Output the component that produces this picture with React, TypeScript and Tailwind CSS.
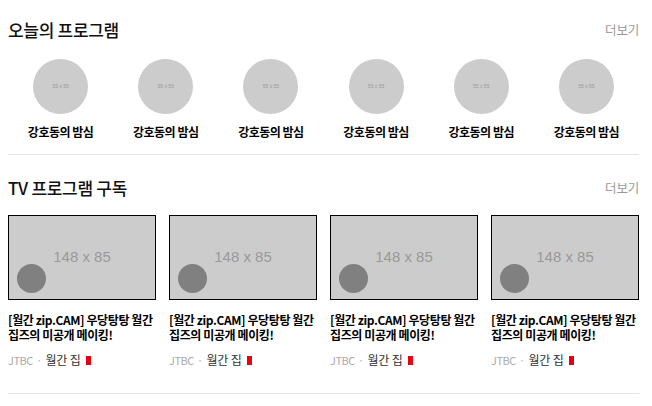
import React from "react";

const KR = { fontFamily: '"Noto Sans CJK KR", "Noto Sans", sans-serif' } as React.CSSProperties;

function Header({ title }: { title: string }) {
  return (
    <div className="flex h-[30px] items-center justify-between">
      <h2 className="text-[17px] font-medium tracking-[-0.3px] text-[#111]">{title}</h2>
      <a className="text-[12.5px] tracking-[-0.2px] text-[#999]">더보기</a>
    </div>
  );
}

export default function App() {
  const programs = Array.from({ length: 6 });
  const cards = Array.from({ length: 4 });
  return (
    <div className="w-[652px] h-[406px] bg-white overflow-hidden" style={KR}>
      <div className="ml-2 w-[631px]">
        <div className="mt-[15px]">
          <Header title="오늘의 프로그램" />
        </div>
        <div className="mt-[14px] grid grid-cols-6">
          {programs.map((_, i) => (
            <div key={i} className="flex flex-col items-center">
              <div className="flex h-[55px] w-[55px] items-center justify-center rounded-full bg-[#cccccc]">
                <span
                  className="text-[5px] text-[#999]"
                  style={{ fontFamily: '"Liberation Sans", Arial, sans-serif' }}
                >
                  55 x 55
                </span>
              </div>
              <div className="mt-[10px] text-[12px] leading-4 font-bold tracking-[-0.5px] text-black">
                강호동의 밤심
              </div>
            </div>
          ))}
        </div>
        <div className="mt-[14px] h-px bg-[#e5e5e5]" />

        <div className="mt-[18px]">
          <Header title="TV 프로그램 구독" />
        </div>
        <div className="mt-[12px] grid grid-cols-[repeat(4,148px)] gap-x-[13px]">
          {cards.map((_, i) => (
            <div key={i}>
              <div className="relative flex h-[85px] w-[148px] items-center justify-center border border-black bg-[#cccccc]">
                <span
                  className="text-[15px] text-[#999]"
                  style={{ fontFamily: '"Liberation Sans", Arial, sans-serif' }}
                >
                  148 x 85
                </span>
                <div className="absolute bottom-[6px] left-[8px] h-[29px] w-[29px] rounded-full bg-[#808080]" />
              </div>
              <div className="mt-[12px] break-keep text-[12px] leading-[15px] font-bold tracking-[-0.4px] text-black">
                [월간 zip.CAM] 우당탕탕 월간 집즈의 미공개 메이킹!
              </div>
              <div className="mt-[10px] flex items-center text-[12px] leading-4">
                <span className="text-[11px] tracking-[-0.5px] text-[#aaa]">JTBC</span>
                <span className="ml-[3px] mr-[3px] text-[#bbb]">·</span>
                <span className="tracking-[-0.2px] text-[#333]">월간 집</span>
                <span className="ml-[6px] inline-block h-[9px] w-[5px] bg-[#e60012]" />
              </div>
            </div>
          ))}
        </div>
        <div className="mt-[25px] h-px bg-[#e5e5e5]" />
      </div>
    </div>
  );
}
